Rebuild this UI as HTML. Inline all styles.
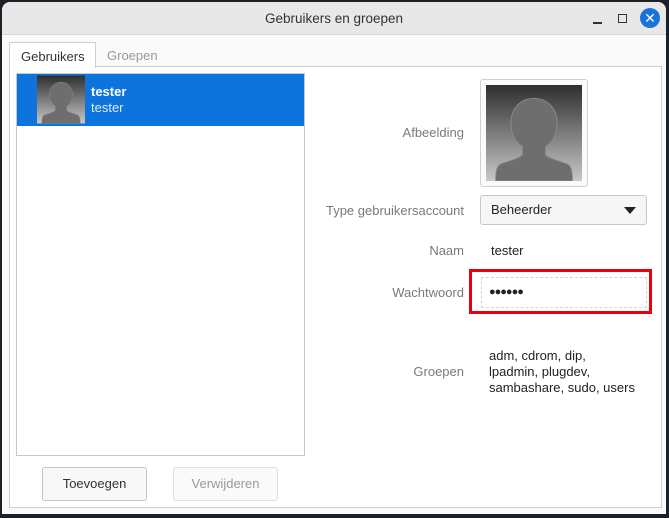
<!DOCTYPE html>
<html><head><meta charset="utf-8"><style>
*{margin:0;padding:0;box-sizing:border-box}
body{width:669px;height:518px;background:#1c2128;position:relative;overflow:hidden;font-family:"Liberation Sans","DejaVu Sans",sans-serif;font-size:13px;color:#333}
.a{position:absolute}
.win{left:2px;top:2px;width:664px;height:512px;background:#fafafa;border-radius:8px 8px 0 0;overflow:hidden}
.title{left:0;top:0;width:664px;height:33px;background:#e8e8e8;border-bottom:1px solid #d8d8d8}
.lbl{color:#7a7a7a;text-align:right;width:160px}
</style></head><body>
<svg width="0" height="0" style="position:absolute"><defs>
<linearGradient id="g" x1="0" y1="0" x2="0" y2="1"><stop offset="0" stop-color="#2e2e2e"/><stop offset="1" stop-color="#c8c8c8"/></linearGradient>
<symbol id="av" viewBox="0 0 100 100"><rect width="100" height="100" fill="url(#g)"/><path d="M50 14c-15 0-24 11-24 26 0 11 5 20 12 24v9c-5 4-14 6-22 9-5 2-6 8-6 18h80c0-10-1-16-6-18-8-3-17-5-22-9v-9c7-4 12-13 12-24 0-15-9-26-24-26z" fill="#6e6e6e" stroke="#8a8a8a" stroke-width="1"/></symbol>
</defs></svg>
<div class="a win">
<div class="a title"></div>
<div class="a" style="left:0;top:9px;width:664px;text-align:center;color:#333;font-size:13.5px">Gebruikers en groepen</div>
<div class="a" style="left:591px;top:20px;width:9px;height:1.5px;background:#333"></div>
<div class="a" style="left:616px;top:12px;width:9px;height:9px;border:1.5px solid #333"></div>
<div class="a" style="left:638px;top:6px;width:20px;height:20px;border-radius:50%;background:#1a73d9;color:#fff;font-weight:bold;text-align:center;line-height:20px;font-size:14px">✕</div>
<div class="a" style="left:7px;top:64px;width:653px;height:442px;border:1px solid #cfcfcf;background:#fff"></div>
<div class="a" style="left:7px;top:40px;width:87px;height:26px;border:1px solid #cfcfcf;border-bottom:none;background:#fff;padding:6px 0 0 11px;color:#333">Gebruikers</div>
<div class="a" style="left:105px;top:46px;color:#999">Groepen</div>
<div class="a" style="left:14px;top:71px;width:289px;height:383px;border:1px solid #c8c8c8;background:#fff"></div>
<div class="a" style="left:15px;top:72px;width:287px;height:52px;background:#0e74dd"></div>
<svg class="a" style="left:35px;top:73px" width="48" height="49"><use href="#av" width="48" height="49" preserveAspectRatio="none"/></svg>
<div class="a" style="left:89px;top:82px;color:#fff;font-weight:bold">tester</div>
<div class="a" style="left:89px;top:98px;color:#dfe9f7">tester</div>
<div class="a" style="left:40px;top:465px;width:105px;height:34px;border:1px solid #c4c4c4;border-radius:3px;background:#f8f8f8;text-align:center;line-height:32px;color:#333">Toevoegen</div>
<div class="a" style="left:171px;top:465px;width:105px;height:34px;border:1px solid #e0e0e0;border-radius:3px;background:#fafafa;text-align:center;line-height:32px;color:#999">Verwijderen</div>
<div class="a lbl" style="left:302px;top:123px">Afbeelding</div>
<div class="a" style="left:478px;top:77px;width:108px;height:108px;border:1px solid #d0d0d0;border-radius:3px;background:#fafafa"></div>
<svg class="a" style="left:484px;top:83px" width="96" height="96"><use href="#av" width="96" height="96"/></svg>
<div class="a lbl" style="left:302px;top:201px">Type gebruikersaccount</div>
<div class="a" style="left:478px;top:193px;width:167px;height:30px;border:1px solid #c8c8c8;border-radius:3px;background:#f6f6f6"></div>
<div class="a" style="left:489px;top:200px;color:#222">Beheerder</div>
<div class="a" style="left:622px;top:205px;width:0;height:0;border-left:6px solid transparent;border-right:6px solid transparent;border-top:7px solid #222"></div>
<div class="a lbl" style="left:302px;top:241px">Naam</div>
<div class="a" style="left:489px;top:241px;color:#222">tester</div>
<div class="a" style="left:467px;top:267px;width:183px;height:45px;border:3px solid #e8000e"></div>
<div class="a" style="left:479px;top:275px;width:166px;height:31px;border:1px dashed #d4d4d4;background:#fff;padding-left:7px;line-height:29px;color:#222;font-size:11px;letter-spacing:-1px">●●●●●●</div>
<div class="a lbl" style="left:302px;top:283px">Wachtwoord</div>
<div class="a lbl" style="left:302px;top:362px">Groepen</div>
<div class="a" style="left:487px;top:346px;color:#222;line-height:16px">adm, cdrom, dip,<br>lpadmin, plugdev,<br>sambashare, sudo, users</div>
</div>
</body></html>
